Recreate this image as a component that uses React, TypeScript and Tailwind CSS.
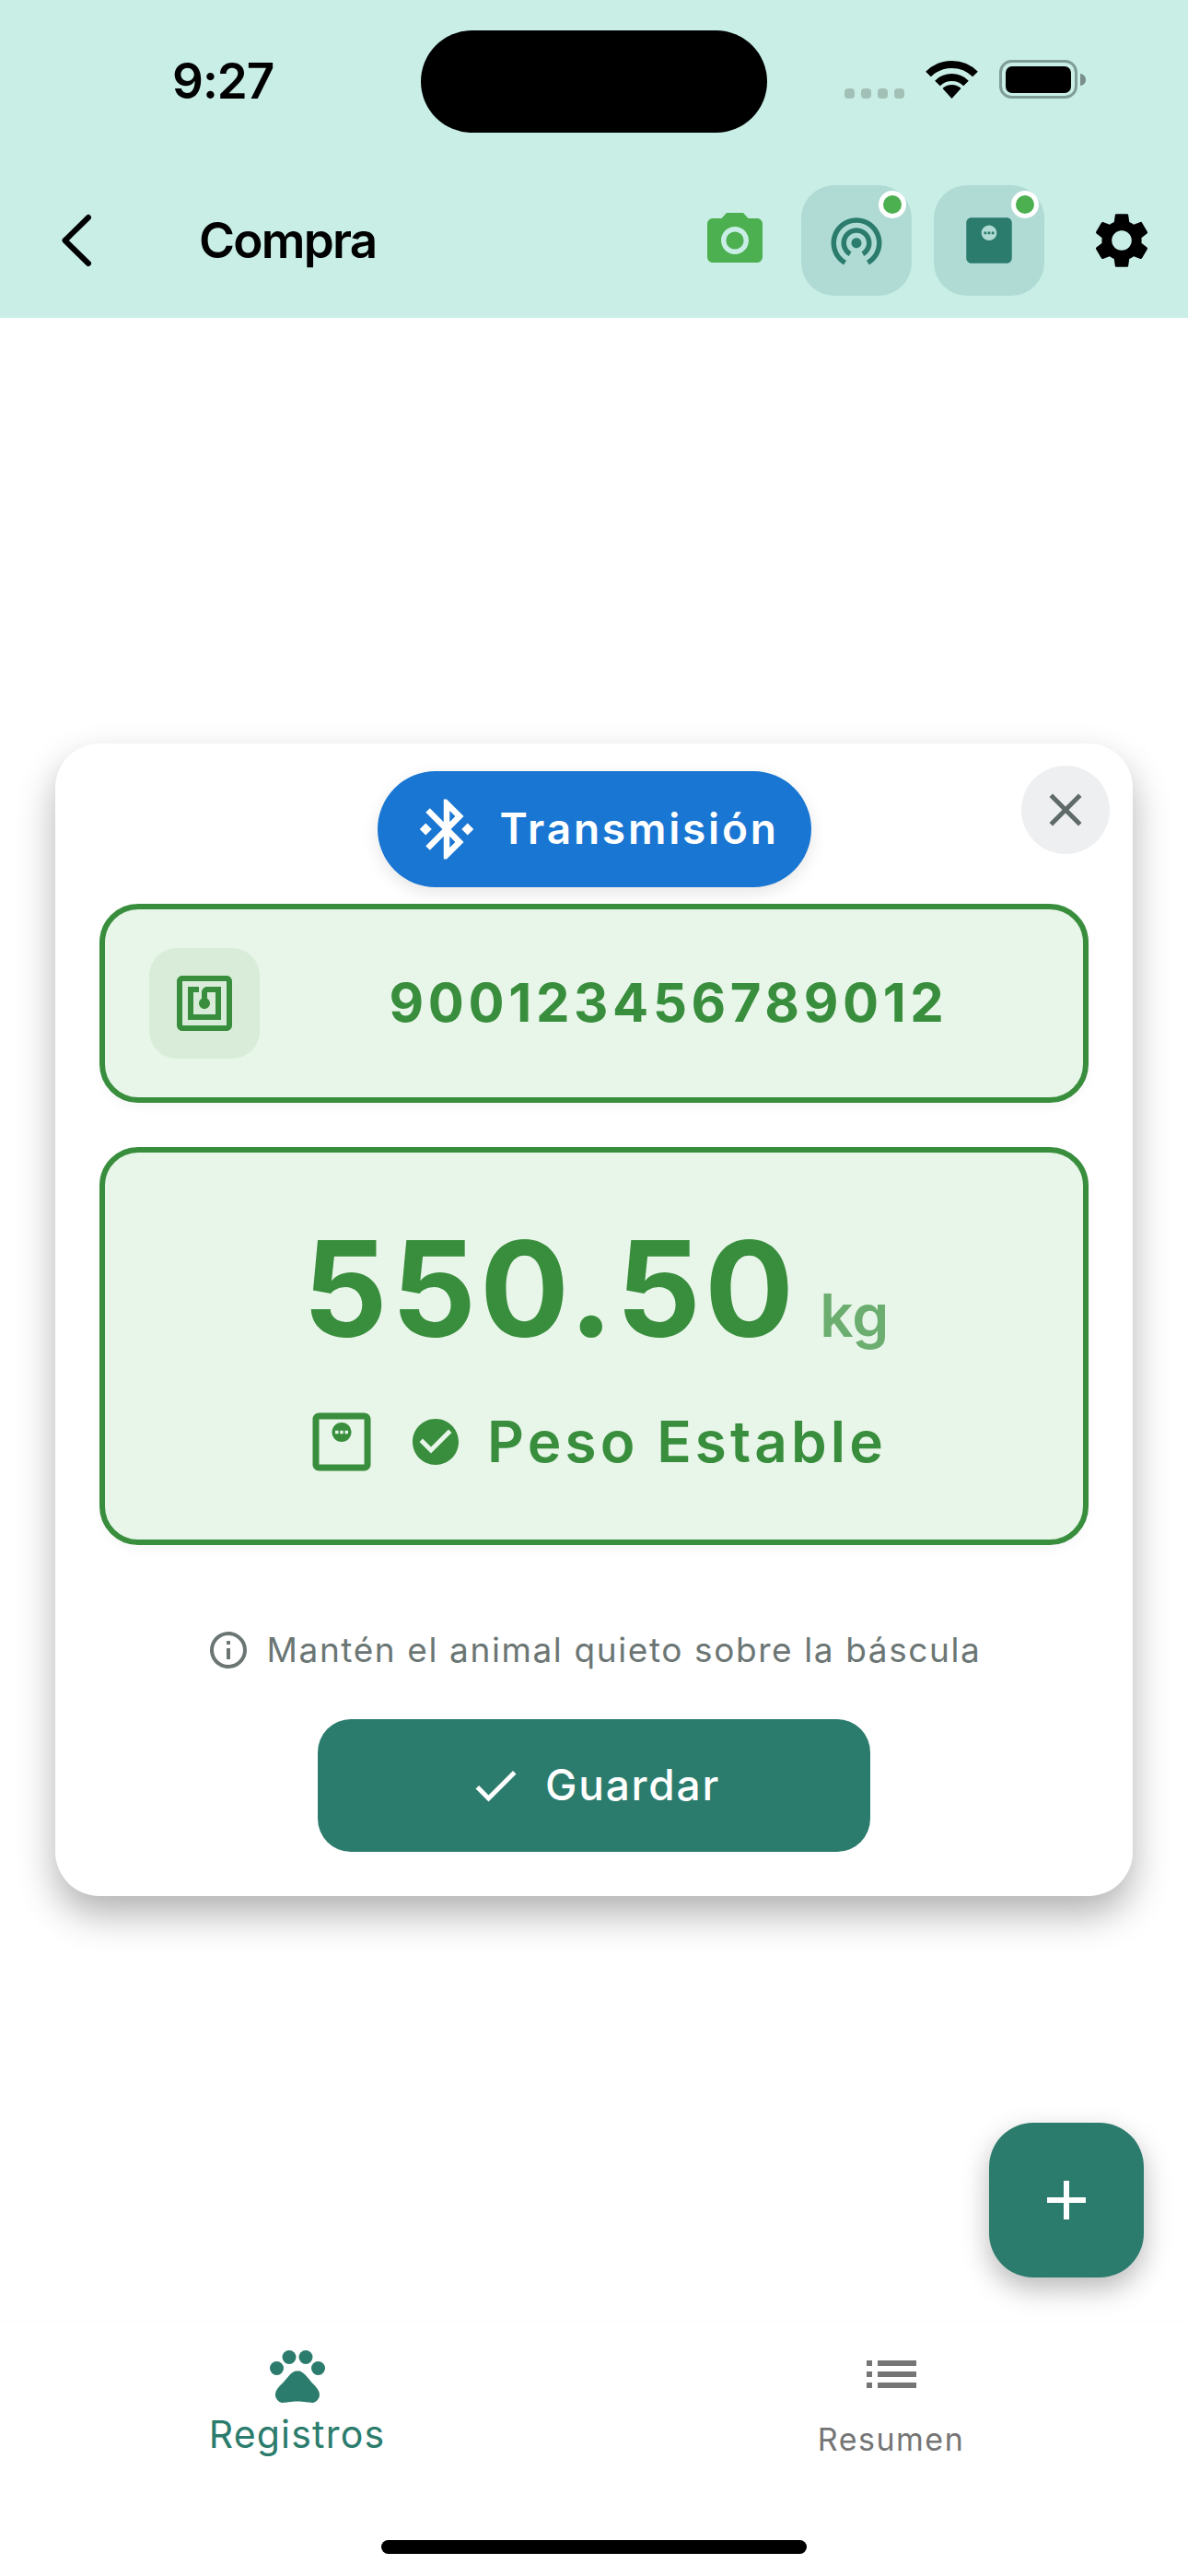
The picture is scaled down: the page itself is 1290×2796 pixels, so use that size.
import {
  MdAdd,
  MdBluetoothConnected,
  MdCameraAlt,
  MdCheck,
  MdCheckCircle,
  MdClose,
  MdInfoOutline,
  MdList,
  MdMonitorWeight,
  MdNfc,
  MdOutlineMonitorWeight,
  MdPets,
  MdSettings,
  MdWifiTethering,
} from "react-icons/md";

function StatusBar() {
  return (
    <div className="flex h-[201px] items-start">
      <div className="w-[457px] pl-[187px] pt-[56px] text-[53px] font-semibold leading-[64px] tracking-[-1px] text-black">
        9:27
      </div>
      <div className="mt-[33px] h-[111px] w-[376px] rounded-full bg-black" />
      <div className="ml-[84px] mt-[65px] flex items-end">
        {/* signal dots */}
        <div className="flex gap-[7px] pb-0">
          <span className="h-[11px] w-[11px] rounded-[4px] bg-[#a3c0b7]" />
          <span className="h-[11px] w-[11px] rounded-[4px] bg-[#a3c0b7]" />
          <span className="h-[11px] w-[11px] rounded-[4px] bg-[#a3c0b7]" />
          <span className="h-[11px] w-[11px] rounded-[4px] bg-[#a3c0b7]" />
        </div>
        <svg className="ml-[23px]" width="57" height="42" viewBox="0 0 57 42">
          <path d="M3 15.5A36 36 0 0 1 54 15.5" fill="none" stroke="#000" strokeWidth="8" />
          <path d="M13 25.5A22 22 0 0 1 44 25.5" fill="none" stroke="#000" strokeWidth="8" />
          <path d="M28.5 42L18.5 31A14.5 14.5 0 0 1 38.5 31Z" fill="#000" />
        </svg>
        <svg className="ml-[23px]" width="94" height="42" viewBox="0 0 94 42">
          <rect x="1.5" y="1.5" width="82" height="39" rx="12" fill="none" stroke="#7f9c97" strokeWidth="3" />
          <rect x="7" y="7" width="71" height="29" rx="7" fill="#000" />
          <path d="M88 15c3.500 0.500 6 3 6 6.500s-2.500 6-6 6.500z" fill="#7a8f8b" />
        </svg>
      </div>
    </div>
  );
}

function DeviceButton({ children }: { children: React.ReactNode }) {
  return (
    <div className="relative flex h-[120px] w-[120px] items-center justify-center rounded-[36px] bg-[#b0dbd4] text-[#2b7c6d]">
      {children}
      <span className="absolute right-[6px] top-[6px] h-[30px] w-[30px] rounded-full border-[5px] border-white bg-[#4caf50]" />
    </div>
  );
}

function Header() {
  return (
    <header className="h-[345px] shrink-0 bg-[#c8eee6]">
      <StatusBar />
      <div className="flex h-[120px] items-center pl-[67px] pr-[36px]">
        <svg width="33" height="60" viewBox="0 0 33 60" className="shrink-0">
          <path d="M29 5L3.500 30L29 55" fill="none" stroke="#000" strokeWidth="6" strokeLinecap="round" strokeLinejoin="round" />
        </svg>
        <div className="ml-[116px] flex-1 text-[53px] font-semibold leading-[64px] tracking-[-1.800px] text-black">Compra</div>
        <MdCameraAlt size={72} className="text-[#4caf50]" />
        <div className="ml-[36px]">
          <DeviceButton>
            <MdWifiTethering size={66} />
          </DeviceButton>
        </div>
        <div className="ml-[24px]">
          <DeviceButton>
            <MdMonitorWeight size={66} />
          </DeviceButton>
        </div>
        <MdSettings size={72} className="ml-[48px] text-black" />
      </div>
    </header>
  );
}

function ReadingCard() {
  return (
    <div className="relative w-[1170px] rounded-[48px] bg-white px-[48px] pb-[48px] pt-[30px] shadow-[0_20px_40px_rgba(0,0,0,0.3)]">
      <button className="absolute right-[25px] top-[24px] flex h-[96px] w-[96px] items-center justify-center rounded-full bg-[#eeeff1] text-[#5f6b68]">
        <MdClose size={60} />
      </button>

      <div className="mx-auto flex h-[126px] w-[471px] items-center rounded-full bg-[#1976d2] pl-[36px] text-white shadow-[0_6px_18px_rgba(0,0,0,0.1)]">
        <MdBluetoothConnected size={78} />
        <span className="ml-[19px] text-[46px] font-semibold tracking-[2.800px]">Transmisión</span>
      </div>

      {/* tag */}
      <div className="mt-[18px] flex h-[216px] items-center rounded-[42px] border-[6px] border-[#388e3c] bg-[#e8f5e9] pl-[48px] pr-[48px] text-[#388e3c] shadow-[0_6px_12px_rgba(0,0,0,0.03)]">
        <div className="flex h-[120px] w-[120px] shrink-0 items-center justify-center rounded-[30px] bg-[#d8ecd9]">
          <MdNfc size={72} />
        </div>
        <div className="flex-1 pl-[42px] text-center text-[58px] font-bold tracking-[4.600px]">900123456789012</div>
      </div>

      {/* weight */}
      <div className="mt-[48px] flex h-[432px] flex-col items-center rounded-[42px] border-[6px] border-[#388e3c] bg-[#e8f5e9] pt-[63px] text-[#388e3c] shadow-[0_6px_12px_rgba(0,0,0,0.03)]">
        <div className="flex items-baseline pl-[4px]">
          <span className="text-[144px] font-bold leading-[170px] tracking-[4px]">550.50</span>
          <span className="ml-[24px] text-[64px] font-semibold leading-[80px] text-[#388e3c]/70">kg</span>
        </div>
        <div className="mt-[39px] flex items-center pl-[2px]">
          <MdOutlineMonitorWeight size={84} />
          <MdCheckCircle size={60} className="ml-[30px]" />
          <span className="ml-[26px] text-[62px] font-semibold leading-[76px] tracking-[4.100px]">Peso Estable</span>
        </div>
      </div>

      <div className="mt-[90px] flex items-center justify-center text-[#6b7674]">
        <MdInfoOutline size={48} />
        <span className="ml-[17px] text-[37px] leading-[48px] tracking-[1.600px]">Mantén el animal quieto sobre la báscula</span>
      </div>

      <button className="mx-auto mt-[51px] flex h-[144px] w-[600px] items-center justify-center rounded-[36px] bg-[#2b7c6d] text-white">
        <MdCheck size={60} />
        <span className="ml-[24px] text-[46px] font-medium tracking-[1.800px]">Guardar</span>
      </button>
    </div>
  );
}

function BottomNav() {
  return (
    <nav className="flex h-[277px] shrink-0 flex-col border-t border-[#fafcfb]">
      <div className="flex flex-1">
        <div className="flex flex-1 flex-col items-center pt-[22px] text-[#2b7c6d]">
          <MdPets size={72} />
          <span className="mt-[3px] text-[41px] leading-[50px] tracking-[1.200px]">Registros</span>
        </div>
        <div className="flex flex-1 flex-col items-center pt-[21px] text-[#757575]">
          <MdList size={72} />
          <span className="mt-[13px] text-[34px] leading-[44px] tracking-[1.500px]">Resumen</span>
        </div>
      </div>
      <div className="mb-[24px] self-center h-[15px] w-[462px] rounded-full bg-black" />
    </nav>
  );
}

export default function App() {
  return (
    <div className="relative flex h-[2796px] w-[1290px] flex-col overflow-hidden bg-white [font-family:Inter,sans-serif]">
      <Header />
      <main className="flex flex-1 items-center justify-center">
        <ReadingCard />
      </main>
      <BottomNav />
      {/* FAB */}
      <button className="absolute bottom-[324px] right-[48px] flex h-[168px] w-[168px] items-center justify-center rounded-[48px] bg-[#2b7c6d] text-white shadow-[0_12px_30px_rgba(0,0,0,0.28)]">
        <MdAdd size={72} />
      </button>
    </div>
  );
}
